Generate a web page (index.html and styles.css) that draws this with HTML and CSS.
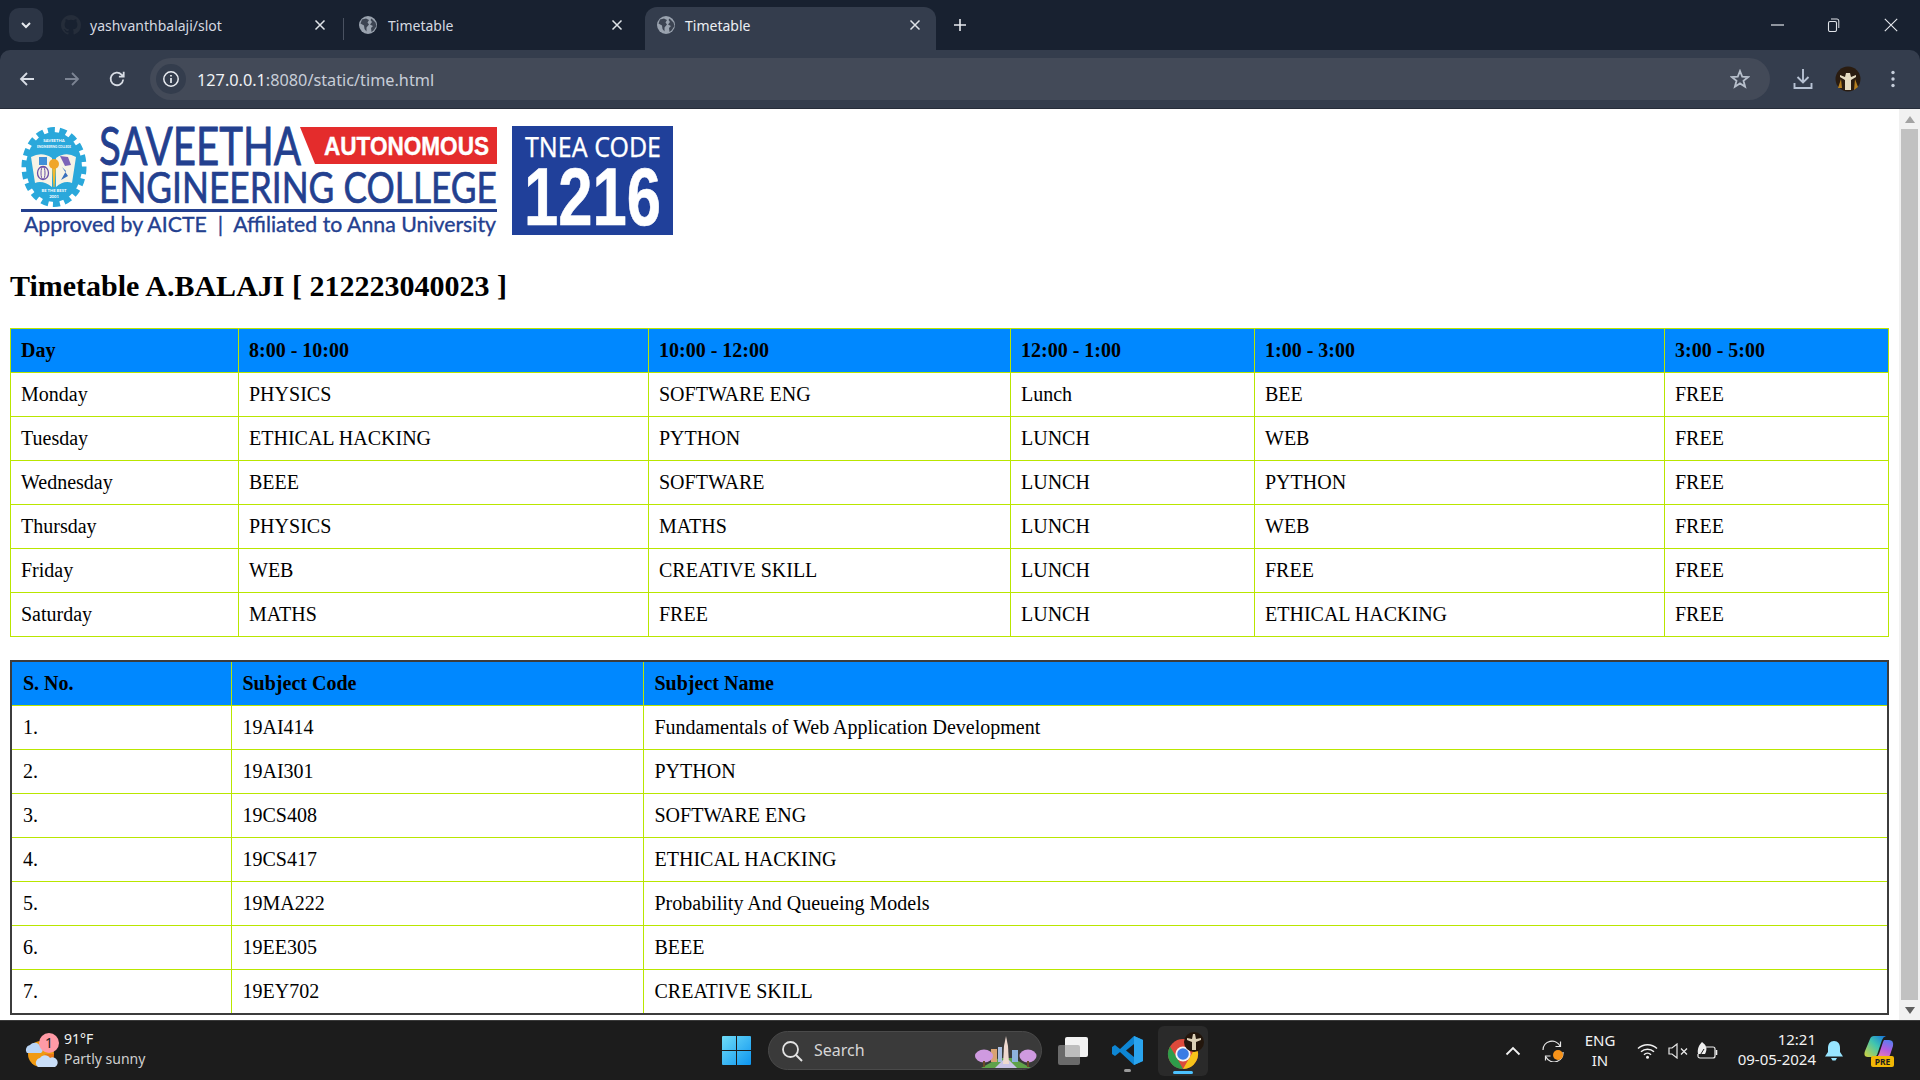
FILE: index.html
```html
<!DOCTYPE html>
<html lang="en">
<head>
<meta charset="utf-8">
<title>Timetable</title>
<link rel="stylesheet" href="styles.css">
</head>
<body>
<svg class="defs" width="0" height="0" aria-hidden="true">
  <defs>
    <symbol id="globe" viewBox="0 0 20 20">
      <circle cx="10" cy="10" r="9" fill="#9aa3af"/>
      <path d="M4 4.5 8 3.5 11 5 9.5 7.5 11 9.5 8.5 12.5 8.5 16.5 6.5 14 6 10.5 2.5 8.5ZM13.5 3.5 17.5 7.5 18.5 11 15.5 15.5 13.5 17 13 13 15 11 12 9.5 14 7 12.5 5Z" fill="#3c4452"/>
    </symbol>
    <symbol id="close" viewBox="0 0 12 12">
      <path d="M1.5 1.5 10.5 10.5M10.5 1.5 1.5 10.5" stroke="#dfe3e8" stroke-width="1.5" fill="none"/>
    </symbol>
  </defs>
</svg>
<div class="screen">
  <header class="tabstrip">
    <div class="tabsearch">
      <svg width="12" height="12" viewBox="0 0 12 12"><path d="M2 4 6 8 10 4" stroke="#e6e9ee" stroke-width="2" fill="none"/></svg>
    </div>
    <div class="tab tab-first">
      <svg class="fav" width="20" height="20" viewBox="0 0 16 16"><path fill="#252d3a" d="M8 0C3.58 0 0 3.58 0 8c0 3.54 2.29 6.53 5.47 7.59.4.07.55-.17.55-.38v-1.34c-2.23.48-2.7-1.07-2.7-1.07-.36-.92-.89-1.17-.89-1.17-.73-.5.05-.49.05-.49.8.06 1.23.82 1.23.82.72 1.22 1.87.87 2.33.66.07-.52.28-.87.51-1.07-1.78-.2-3.64-.89-3.64-3.95 0-.87.31-1.59.82-2.15-.08-.2-.36-1.02.08-2.12 0 0 .67-.21 2.2.82a7.7 7.7 0 0 1 4 0c1.53-1.04 2.2-.82 2.2-.82.44 1.1.16 1.92.08 2.12.51.56.82 1.27.82 2.15 0 3.07-1.87 3.75-3.65 3.95.29.25.54.73.54 1.48v2.2c0 .21.15.46.55.38A8 8 0 0 0 16 8c0-4.42-3.58-8-8-8Z"/></svg>
      <span class="tabtitle">yashvanthbalaji/slot</span>
      <svg class="tabx" width="12" height="12"><use href="#close"/></svg>
    </div>
    <div class="tabsep"></div>
    <div class="tab tab-second">
      <svg class="fav" width="20" height="20"><use href="#globe"/></svg>
      <span class="tabtitle">Timetable</span>
      <svg class="tabx" width="12" height="12"><use href="#close"/></svg>
    </div>
    <div class="tab tab-active">
      <svg class="fav" width="20" height="20"><use href="#globe"/></svg>
      <span class="tabtitle">Timetable</span>
      <svg class="tabx" width="12" height="12"><use href="#close"/></svg>
    </div>
    <svg class="newtab" width="14" height="14" viewBox="0 0 14 14"><path d="M7 1V13M1 7H13" stroke="#e6e9ee" stroke-width="1.6"/></svg>
    <div class="winctl">
      <svg class="win-min" width="14" height="14" viewBox="0 0 14 14"><path d="M1 7H14" stroke="#dfe3e8" stroke-width="1.2"/></svg>
      <svg class="win-max" width="14" height="14" viewBox="0 0 14 14"><rect x="2.5" y="3.5" width="8" height="10" rx="1.5" fill="none" stroke="#dfe3e8" stroke-width="1.1"/><path d="M5 1H11A1.8 1.8 0 0 1 12.8 3V10" fill="none" stroke="#dfe3e8" stroke-width="1"/></svg>
      <svg class="win-close" width="14" height="14" viewBox="0 0 14 14"><path d="M.8.8 13.2 13.2M13.2.8.8 13.2" stroke="#e6e9ee" stroke-width="1.1"/></svg>
    </div>
  </header>

  <nav class="toolbar">
    <svg class="navicon" width="18" height="18" viewBox="0 0 18 18"><path d="M16 9H3M9 3 3 9 9 15" stroke="#d8dde5" stroke-width="1.8" fill="none"/></svg>
    <svg class="navicon nav-gap" width="18" height="18" viewBox="0 0 18 18"><path d="M2 9H15M9 3 15 9 9 15" stroke="#7c8493" stroke-width="1.8" fill="none"/></svg>
    <svg class="navicon nav-gap" width="18" height="18" viewBox="0 0 18 18"><path d="M15.2 9.5A6.3 6.3 0 1 1 13.5 4.6L15.5 6.4M15.7 1.8V6.6H10.9" stroke="#d8dde5" stroke-width="1.8" fill="none"/></svg>
    <div class="omnibox">
      <div class="infochip">
        <svg width="18" height="18" viewBox="0 0 18 18"><circle cx="9" cy="9" r="7.2" fill="none" stroke="#e8ebf0" stroke-width="1.5"/><path d="M9 8V13M9 5V6.6" stroke="#e8ebf0" stroke-width="1.7"/></svg>
      </div>
      <div class="url"><span class="url-host">127.0.0.1</span>:8080/static/time.html</div>
      <svg class="star" width="20" height="20" viewBox="0 0 20 20"><path d="M10 2 12.2 7.6 18.2 8 13.5 11.8 15.1 17.7 10 14.4 4.9 17.7 6.5 11.8 1.8 8 7.8 7.6Z" fill="none" stroke="#b7bfcb" stroke-width="1.8"/></svg>
    </div>
    <svg class="tool-dl" width="20" height="22" viewBox="0 0 20 22"><path d="M10 1V14M4.5 9 10 14.5 15.5 9M1.5 15V20H18.5V15" fill="none" stroke="#b7c2d3" stroke-width="1.9"/></svg>
    <svg class="tool-av" width="26" height="26" viewBox="0 0 26 26">
      <circle cx="13" cy="13" r="12.5" fill="#2a1c10"/>
      <path d="M3 22 6 13 7 22ZM19 24 20 13 23 21Z" fill="#b67f1e"/>
      <path d="M11 7 15 7 16 11 21 9 21 11 16 14 16 24 10 24 10 14 5 11 5 9 10 11Z" fill="#e6dcc2"/>
    </svg>
    <svg class="tool-menu" width="6" height="20" viewBox="0 0 6 20"><circle cx="3" cy="3.5" r="1.7" fill="#c6cedb"/><circle cx="3" cy="10" r="1.7" fill="#c6cedb"/><circle cx="3" cy="16.5" r="1.7" fill="#c6cedb"/></svg>
  </nav>

  <div class="viewport">
    <main class="page">
      <svg class="logo" width="670" height="125" viewBox="10 119 670 125" role="img" aria-label="Saveetha Engineering College">
        <ellipse cx="54" cy="167" rx="29.5" ry="37" fill="none" stroke="#2aa8db" stroke-width="6" stroke-dasharray="7 4.6"/>
        <ellipse cx="54" cy="167" rx="28" ry="35" fill="#2aa8db"/>
        <path d="M31 157Q42 151 52 158V187Q43 180 35 183ZM56 158Q66 151 76 157L72 183Q64 180 56 187Z" fill="#f6f3e6"/>
        <path d="M39 157H47V165H39Z" fill="#3f8fd8"/>
        <path d="M60 156 68 157 71 165 65 166Z" fill="#7b63b8"/>
        <ellipse cx="43" cy="173" rx="5.5" ry="6.5" fill="none" stroke="#6a4ea8" stroke-width="1.3"/>
        <ellipse cx="43" cy="173" rx="2" ry="6.5" fill="none" stroke="#6a4ea8" stroke-width="1"/>
        <path d="M62 167 68 176 61 180 66 171Z" fill="#3a70bd"/>
        <path d="M52 166H56L54.5 187H53.5Z" fill="#f4b92c"/>
        <circle cx="54" cy="164" r="5" fill="#f0a62a"/>
        <text class="logo-tiny" x="54" y="142" text-anchor="middle">SAVEETHA</text>
        <text class="logo-tiny" x="54" y="148" text-anchor="middle" textLength="34" lengthAdjust="spacingAndGlyphs">ENGINEERING COLLEGE</text>
        <text class="logo-tiny" x="54" y="192" text-anchor="middle">BE THE BEST</text>
        <text class="logo-tiny" x="54" y="197.5" text-anchor="middle">2001</text>

        <path d="M300 127H497V164H315Z" fill="#e42c2c"/>
        <text class="logo-sav" x="99" y="165" textLength="202" lengthAdjust="spacingAndGlyphs">SAVEETHA</text>
        <text class="logo-aut" x="324" y="155" textLength="165" lengthAdjust="spacingAndGlyphs">AUTONOMOUS</text>
        <text class="logo-eng" x="99" y="203" textLength="398" lengthAdjust="spacingAndGlyphs">ENGINEERING COLLEGE</text>
        <rect x="21" y="209" width="476" height="3" fill="#23408f"/>
        <text class="logo-app" x="24" y="232" textLength="472" lengthAdjust="spacingAndGlyphs">Approved by AICTE  |  Affiliated to Anna University</text>
        <rect x="512" y="126" width="161" height="109" fill="#20409a"/>
        <text class="logo-tnea" x="525" y="157" textLength="136" lengthAdjust="spacingAndGlyphs">TNEA CODE</text>
        <text class="logo-code" x="524" y="225" textLength="137" lengthAdjust="spacingAndGlyphs">1216</text>
      </svg>

      <h2 class="title">Timetable A.BALAJI [ 212223040023 ]</h2>

      <table class="grid grid-time">
        <colgroup>
          <col class="t1a"><col class="t1b"><col class="t1c"><col class="t1d"><col class="t1e"><col class="t1f">
        </colgroup>
        <tr><th>Day</th><th>8:00 - 10:00</th><th>10:00 - 12:00</th><th>12:00 - 1:00</th><th>1:00 - 3:00</th><th>3:00 - 5:00</th></tr>
        <tr><td>Monday</td><td>PHYSICS</td><td>SOFTWARE ENG</td><td>Lunch</td><td>BEE</td><td>FREE</td></tr>
        <tr><td>Tuesday</td><td>ETHICAL HACKING</td><td>PYTHON</td><td>LUNCH</td><td>WEB</td><td>FREE</td></tr>
        <tr><td>Wednesday</td><td>BEEE</td><td>SOFTWARE</td><td>LUNCH</td><td>PYTHON</td><td>FREE</td></tr>
        <tr><td>Thursday</td><td>PHYSICS</td><td>MATHS</td><td>LUNCH</td><td>WEB</td><td>FREE</td></tr>
        <tr><td>Friday</td><td>WEB</td><td>CREATIVE SKILL</td><td>LUNCH</td><td>FREE</td><td>FREE</td></tr>
        <tr><td>Saturday</td><td>MATHS</td><td>FREE</td><td>LUNCH</td><td>ETHICAL HACKING</td><td>FREE</td></tr>
      </table>

      <table class="grid grid-subjects">
        <colgroup>
          <col class="t2a"><col class="t2b"><col class="t2c">
        </colgroup>
        <tr><th>S. No.</th><th>Subject Code</th><th>Subject Name</th></tr>
        <tr><td>1.</td><td>19AI414</td><td>Fundamentals of Web Application Development</td></tr>
        <tr><td>2.</td><td>19AI301</td><td>PYTHON</td></tr>
        <tr><td>3.</td><td>19CS408</td><td>SOFTWARE ENG</td></tr>
        <tr><td>4.</td><td>19CS417</td><td>ETHICAL HACKING</td></tr>
        <tr><td>5.</td><td>19MA222</td><td>Probability And Queueing Models</td></tr>
        <tr><td>6.</td><td>19EE305</td><td>BEEE</td></tr>
        <tr><td>7.</td><td>19EY702</td><td>CREATIVE SKILL</td></tr>
      </table>
    </main>
    <div class="scrollbar">
      <div class="sb-arrow"><svg width="10" height="7" viewBox="0 0 10 7"><path d="M5 0 10 7H0Z" fill="#a3a3a3"/></svg></div>
      <div class="sb-thumb"></div>
      <div class="sb-arrow"><svg width="10" height="7" viewBox="0 0 10 7"><path d="M0 0H10L5 7Z" fill="#5f5f5f"/></svg></div>
    </div>
  </div>

  <footer class="taskbar">
    <div class="tb-weather">
      <div class="wx-icon">
        <svg width="34" height="36" viewBox="0 0 34 36">
          <circle cx="16" cy="21" r="13" fill="#f09a12"/>
          <path d="M16 34A13 13 0 0 0 29 21H20Z" fill="#e2611a" opacity=".6"/>
          <path d="M2 20A5 5 0 0 1 5 12 6 6 0 0 1 15 13 4 4 0 0 1 16 20Z" fill="#b9d4f5"/>
          <path d="M13 34A5 5 0 0 1 15 25 6 6 0 0 1 25 25 5 5 0 0 1 30 34Z" fill="#c9def8"/>
        </svg>
        <span class="wx-badge">1</span>
      </div>
      <div class="wx-text">
        <div class="wx-temp">91°F</div>
        <div class="wx-desc">Partly sunny</div>
      </div>
    </div>

    <div class="tb-center">
      <svg class="startlogo" width="29" height="29" viewBox="0 0 29 29">
        <defs><linearGradient id="win" x1="0" y1="0" x2="1" y2="1"><stop offset="0" stop-color="#6fdcf7"/><stop offset="1" stop-color="#0d95f0"/></linearGradient></defs>
        <path d="M0 1A1 1 0 0 1 1 0H14V14H0ZM15 0H28A1 1 0 0 1 29 1V14H15ZM0 15H14V29H1A1 1 0 0 1 0 28ZM15 15H29V28A1 1 0 0 1 28 29H15Z" fill="url(#win)"/>
      </svg>
      <div class="searchbox">
        <svg width="22" height="22" viewBox="0 0 22 22"><circle cx="9.5" cy="9.5" r="7.5" fill="none" stroke="#e3e3e3" stroke-width="1.8"/><path d="M15 15 21 21" stroke="#e3e3e3" stroke-width="2"/></svg>
        <span class="searchlabel">Search</span>
        <svg class="searchart" width="62" height="32" viewBox="0 0 62 32">
          <path d="M6 32 24 22H38L56 32Z" fill="#5fa24a"/>
          <path d="M20 32 28 24H34L42 32Z" fill="#c9c3e6"/>
          <rect x="16" y="13" width="6" height="13" fill="#d9a373"/>
          <rect x="37" y="14" width="6" height="12" fill="#8db1dc"/>
          <rect x="23" y="11" width="4" height="15" fill="#a8bde0"/>
          <path d="M29 10 31 0 33 10 34 28H28Z" fill="#efd9cf"/>
          <ellipse cx="9" cy="20" rx="9" ry="6.5" fill="#cf9ae0"/>
          <ellipse cx="53" cy="20" rx="8.5" ry="6.5" fill="#cf9ae0"/>
          <path d="M8 25H10V31H8ZM52 25H54V31H52Z" fill="#6b4a2a"/>
        </svg>
      </div>
      <svg class="taskview" width="30" height="28" viewBox="0 0 30 28">
        <rect x="0" y="8" width="22" height="20" rx="2" fill="#6a6a6a"/>
        <rect x="7" y="0" width="23" height="20" rx="2" fill="#f2f2f2"/>
        <path d="M7 8H20A2 2 0 0 1 22 10V20H9A2 2 0 0 1 7 18Z" fill="#bdbdbd"/>
      </svg>
      <div class="tb-app">
        <svg width="31" height="29" viewBox="0 0 31 29">
          <path d="M22 0 31 4V25L22 29 8 16 3 20 0 18V11L3 9 8 13ZM22 8 14 14.5 22 21Z" fill="#0e86d4"/>
          <path d="M22 0 31 4V25L22 29Z" fill="#2aa4ee"/>
        </svg>
        <span class="tb-dot"></span>
      </div>
      <div class="tb-chrome">
        <svg width="42" height="40" viewBox="-4 0 42 40">
          <circle cx="17" cy="23" r="15" fill="#dd4a3b"/>
          <path d="M17 38A15 15 0 0 1 4 15.5L11 27 17 38Z" fill="#2e9d4a"/>
          <path d="M17 38 24.5 25 30 15.5A15 15 0 0 1 17 38Z" fill="#f6c21a"/>
          <circle cx="17" cy="23" r="7.6" fill="#f5f5f5"/>
          <circle cx="17" cy="23" r="5.8" fill="#3b7de4"/>
          <circle cx="28" cy="11" r="10" fill="#23160c"/>
          <path d="M27 3 29 3 30 8 35 7 35 9 30 11 30 19 26 19 26 11 21 9 21 7 26 8Z" fill="#dcd0b6"/>
        </svg>
        <span class="tb-active"></span>
      </div>
    </div>

    <div class="tb-tray">
      <svg class="tray-chev" width="16" height="10" viewBox="0 0 16 10"><path d="M1.5 8.5 8 2 14.5 8.5" fill="none" stroke="#f2f2f2" stroke-width="1.8"/></svg>
      <svg class="tray-sync" width="22" height="22" viewBox="0 0 22 22">
        <path d="M1 10A9 9 0 0 1 18 6M21 12A9 9 0 0 1 4 17M18.5 1.5V6.5H13.5M3.5 20.5V16H8.5" fill="none" stroke="#e6e6e6" stroke-width="1.2"/>
        <circle cx="16" cy="15" r="5" fill="#f7931a"/>
      </svg>
      <div class="tray-lang"><div>ENG</div><div>IN</div></div>
      <svg class="tray-wifi" width="21" height="16" viewBox="0 0 21 16"><path d="M1 5.5A14 14 0 0 1 20 5.5M4 8.7A9.5 9.5 0 0 1 17 8.7M7 11.7A5 5 0 0 1 14 11.7" fill="none" stroke="#f0f0f0" stroke-width="1.5"/><circle cx="10.5" cy="14.3" r="1.5" fill="#f0f0f0"/></svg>
      <svg class="tray-vol" width="20" height="16" viewBox="0 0 20 16"><path d="M1 5H4L9 1V15L4 11H1Z" fill="none" stroke="#e8e8e8" stroke-width="1.2"/><path d="M13 5.5 19 11.5M19 5.5 13 11.5" stroke="#e8e8e8" stroke-width="1.3"/></svg>
      <svg class="tray-bat" width="22" height="18" viewBox="0 0 22 18"><path d="M10 5H17A2 2 0 0 1 19 7V14A2 2 0 0 1 17 16H4A2 2 0 0 1 2 14V12" fill="none" stroke="#eee" stroke-width="1.2"/><path d="M20.5 8V13" stroke="#eee" stroke-width="1.6"/><path d="M6 0C10 3 12 6 9 12H2C1 7 3 3 6 0Z" fill="#eee"/><path d="M3 15 8 7" stroke="#1c1c1c" stroke-width="1"/></svg>
      <div class="tray-clock"><div>12:21</div><div>09-05-2024</div></div>
      <svg class="tray-bell" width="18" height="20" viewBox="0 0 18 20"><path d="M9 0C13 0 15 3 15 7V11L18 15.5H0L3 11V7C3 3 5 0 9 0ZM6 17H12L10.5 19.5H7.5Z" fill="#98e5ff"/></svg>
      <div class="copilot">
        <svg width="30" height="23" viewBox="0 0 30 23">
          <defs>
            <linearGradient id="copl" x1="1" y1="0" x2="0" y2="1"><stop offset="0" stop-color="#1470e0"/><stop offset=".45" stop-color="#3fc5b0"/><stop offset="1" stop-color="#d6d23a"/></linearGradient>
            <linearGradient id="copr" x1="0.7" y1="0" x2="0.3" y2="1"><stop offset="0" stop-color="#5a7df0"/><stop offset=".5" stop-color="#b45de0"/><stop offset="1" stop-color="#ee7fb0"/></linearGradient>
          </defs>
          <path d="M10 0H22Q19 1 18 4L13 19Q12 21 9 21H4Q-1 21 1 15L6 3Q7 0 10 0Z" fill="url(#copl)"/>
          <path d="M20 4H25Q30 4 29 10L26 19Q25 22 21 22H11Q14 21 15 18L19 6Z" fill="url(#copr)"/>
        </svg>
        <span class="pre">PRE</span>
      </div>
    </div>
  </footer>
</div>
</body>
</html>
```

FILE: styles.css
```css
* { box-sizing: border-box; }

html, body {
  margin: 0;
  height: 100%;
  overflow: hidden;
}

.defs { position: absolute; }

.screen {
  display: flex;
  flex-direction: column;
  width: 1920px;
  height: 1080px;
  background: #182130;
  font-family: "Noto Sans", "Open Sans", sans-serif;
}

/* Tab strip */
.tabstrip {
  display: flex;
  align-items: flex-end;
  height: 50px;
  padding-left: 9px;
  background: #182130;
  color: #dfe3e8;
  font-size: 14px;
  flex: none;
}

.tabsearch {
  display: flex;
  align-items: center;
  justify-content: center;
  width: 34px;
  height: 34px;
  margin-bottom: 8px;
  border-radius: 10px;
  background: #2c3545;
}

.tab {
  display: flex;
  align-items: center;
  height: 43px;
  padding-bottom: 7px;
}

.tab-first { width: 294px; padding-left: 12px; padding-right: 17px; margin-left: 6px; }
.tab-second { width: 294px; padding-left: 14px; padding-right: 15px; }
.tab-active {
  width: 291px;
  padding-left: 11px;
  padding-right: 15px;
  background: #343d4d;
  border-radius: 12px 12px 0 0;
  margin-left: 7px;
}

.fav { flex: none; }
.tabtitle { margin-left: 10px; flex: 1; white-space: nowrap; color: #d5d9e0; }
.tab-first .tabtitle { margin-left: 9px; }
.tab-active .tabtitle { margin-left: 9px; color: #eceff3; }
.tabx { flex: none; }

.tabsep {
  width: 1px;
  height: 22px;
  margin-bottom: 10px;
  background: #4a5261;
}

.newtab { margin: 0 0 18px 17px; }

.winctl {
  display: flex;
  align-items: center;
  margin-left: auto;
  padding-right: 22px;
  height: 50px;
}

.win-max { margin-left: 42px; }
.win-close { margin-left: 44px; }

/* Toolbar */
.toolbar {
  display: flex;
  align-items: center;
  height: 59px;
  padding-left: 18px;
  background: #343d4d;
  border-radius: 10px 10px 0 0;
  border-bottom: 1px solid #262d3a;
  flex: none;
}

.navicon { flex: none; }
.nav-gap { margin-left: 27px; }

.omnibox {
  display: flex;
  align-items: center;
  width: 1620px;
  height: 42px;
  margin-left: 24px;
  padding: 0 20px 0 6px;
  border-radius: 21px;
  background: #434a58;
}

.infochip {
  display: flex;
  align-items: center;
  justify-content: center;
  width: 30px;
  height: 30px;
  border-radius: 50%;
  background: #343d4d;
}

.url {
  margin-left: 11px;
  flex: 1;
  font-size: 16.25px;
  line-height: 24px;
  padding-top: 1px;
  color: #c8ced8;
  white-space: nowrap;
}

.url-host { color: #f0f2f5; }

.tool-dl { margin-left: 23px; }
.tool-av { margin-left: 22px; }
.tool-menu { margin-left: 29px; }

/* Page */
.viewport {
  display: flex;
  flex: 1;
  min-height: 0;
  background: #fff;
}

.page {
  flex: 1;
  min-width: 0;
  padding: 10px 10px 0;
  overflow: hidden;
  font-family: "Liberation Serif", serif;
  color: #000;
}

.logo { display: block; }

.title {
  margin: 25px 0 24px;
  font-size: 30px;
  font-weight: bold;
  line-height: 34.5px;
}

.grid {
  width: 1878px;
  table-layout: fixed;
  border-collapse: collapse;
  font-size: 20px;
}

.grid th, .grid td {
  height: 44px;
  padding: 0 10px;
  border: 1px solid #b9e600;
  text-align: left;
  white-space: nowrap;
}

.grid th { background: #0088ff; font-weight: bold; }

.grid-subjects {
  width: 1877px;
  margin-top: 23px;
  border: 2px solid #3c3c3c;
}

.grid-subjects th, .grid-subjects td { padding-left: 11px; }
.grid-subjects th { height: 45px; border-top: 2px solid #3c3c3c; }
.grid-subjects tr > :first-child { border-left: 2px solid #3c3c3c; }
.grid-subjects tr > :last-child { border-right: 2px solid #3c3c3c; }
.grid-subjects tr:last-child td { border-bottom: 2px solid #3c3c3c; }

.t1a { width: 228px; }
.t1b { width: 410px; }
.t1c { width: 362px; }
.t1d { width: 244px; }
.t1e { width: 410px; }
.t1f { width: 224px; }

.t2a { width: 220px; }
.t2b { width: 412px; }
.t2c { width: 1245px; }

/* Logo text */
.logo text { font-family: "Lato", "Open Sans", sans-serif; fill: #23408f; }
.logo .logo-sav { font-size: 53px; stroke: #23408f; stroke-width: .8px; }
.logo .logo-eng { font-size: 43px; stroke: #23408f; stroke-width: .7px; }
.logo .logo-aut { font-family: "Liberation Sans", sans-serif; font-size: 25.5px; font-weight: 700; fill: #fff; stroke: #fff; stroke-width: .4px; }
.logo .logo-app { font-size: 21px; white-space: pre; stroke: #23408f; stroke-width: .35px; }
.logo .logo-tnea { font-family: "Noto Sans", sans-serif; font-size: 26.5px; fill: #fff; stroke: #fff; stroke-width: .25px; }
.logo .logo-code { font-family: "Liberation Sans", sans-serif; font-size: 82px; font-weight: 700; fill: #fff; stroke: #fff; stroke-width: .6px; }
.logo .logo-tiny { font-size: 4.2px; font-weight: 700; fill: #fff; }

/* Scrollbar */
.scrollbar {
  display: flex;
  flex-direction: column;
  align-items: center;
  width: 21px;
  flex: none;
  background: #f1f1f1;
}

.sb-arrow {
  display: flex;
  align-items: center;
  justify-content: center;
  height: 20px;
  flex: none;
}

.sb-thumb {
  flex: 1;
  width: 17px;
  background: #c1c1c1;
}

/* Taskbar */
.taskbar {
  display: flex;
  align-items: center;
  height: 60px;
  flex: none;
  padding-left: 25px;
  background: #1c1c1c;
  border-top: 1px solid #3a3a3a;
  color: #f2f2f2;
}

.tb-weather { display: flex; align-items: center; width: 697px; flex: none; }

.wx-icon { position: relative; width: 39px; height: 36px; flex: none; }

.wx-badge {
  position: absolute;
  left: 14px;
  top: 0;
  width: 20px;
  height: 20px;
  border-radius: 50%;
  background: #ff9aa6;
  color: #1c1c1c;
  font-size: 14px;
  line-height: 20px;
  text-align: center;
}

.wx-text { font-size: 14px; line-height: 20px; margin-top: -3px; }
.wx-desc { color: #cfcfcf; }

.tb-center { display: flex; align-items: center; flex: none; }

.startlogo { flex: none; }

.searchbox {
  display: flex;
  align-items: center;
  width: 274px;
  height: 39px;
  margin-left: 17px;
  padding-left: 12px;
  border-radius: 20px;
  background: #3a3a3a;
  border: 1px solid #4a4a4a;
}

.searchlabel {
  flex: 1;
  margin-left: 11px;
  padding-bottom: 1px;
  font-size: 16px;
  color: #d6d6d6;
}

.searchart { margin: 3px 4px 0 0; }

.taskview { margin-left: 16px; }

.tb-app {
  display: flex;
  flex-direction: column;
  align-items: center;
  margin-left: 24px;
  position: relative;
}

.tb-dot {
  position: absolute;
  bottom: -7px;
  width: 7px;
  height: 3px;
  border-radius: 2px;
  background: #9a9a9a;
}

.tb-chrome {
  position: relative;
  display: flex;
  align-items: center;
  justify-content: center;
  width: 50px;
  height: 50px;
  margin-left: 15px;
  border-radius: 6px;
  background: #2a2a2a;
}

.tb-active {
  position: absolute;
  bottom: 2px;
  left: 15px;
  width: 20px;
  height: 3px;
  border-radius: 2px;
  background: #4cc2ff;
}

.tb-tray {
  display: flex;
  align-items: center;
  flex: none;
  margin-left: 297px;
  font-size: 15px;
  line-height: 20px;
}

.tray-sync { margin-left: 21px; }
.tray-lang { margin-left: 16px; width: 40px; text-align: center; margin-top: -2px; }
.tray-wifi { margin-left: 17px; }
.tray-vol { margin-left: 10px; }
.tray-bat { margin-left: 8px; }
.tray-clock { margin-left: 8px; width: 90px; text-align: right; white-space: nowrap; margin-top: -4px; }
.tray-bell { margin-left: 9px; }

.copilot { position: relative; width: 30px; height: 30px; margin-left: 21px; }

.pre {
  position: absolute;
  right: 0;
  bottom: -1px;
  width: 23px;
  height: 11px;
  border-radius: 2px;
  background: #f2b705;
  color: #1c1c1c;
  font-size: 8.5px;
  font-weight: 700;
  line-height: 11px;
  text-align: center;
}
```
